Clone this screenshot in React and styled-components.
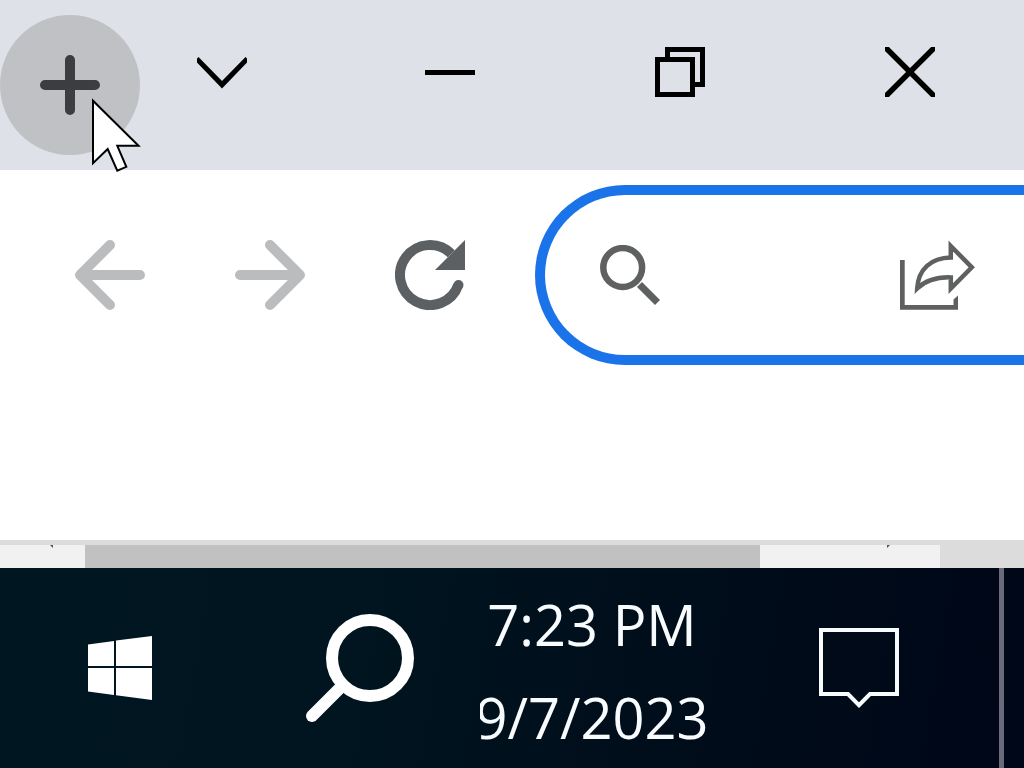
import React, { useState } from "react";
import styled, { createGlobalStyle } from "styled-components";

const GlobalStyle = createGlobalStyle`
	* {
		box-sizing: border-box;
	}

	body {
		margin: 0;
		background: #ffffff;
		font-family: "Open Sans", "Noto Sans", sans-serif;
	}
`;

const Desktop = styled.div`
	display: flex;
	flex-direction: column;
	min-height: 100vh;
	overflow: hidden;
`;

const Button = styled.button`
	display: flex;
	align-items: center;
	justify-content: center;
	flex-shrink: 0;
	padding: 0;
	border: 0;
	background: transparent;
	color: inherit;
	font: inherit;

	svg {
		display: block;
	}
`;

const TabStrip = styled.header`
	position: relative;
	display: flex;
	align-items: flex-start;
	height: 170px;
	background: #dee1e7;
	color: #000000;
`;

const NewTabButton = styled(Button)`
	width: 140px;
	height: 140px;
	margin-top: 15px;
	border-radius: 50%;
	background: #c0c1c5;
	color: #3c3d41;
`;

const CaptionButton = styled(Button)`
	width: 50px;
	height: 50px;
	margin-top: 47px;
`;

const TabSearchButton = styled(CaptionButton)`
	margin-left: 57px;
`;

const WindowControls = styled.div`
	display: flex;
	gap: 180px;
	margin-left: auto;
	padding-right: 89px;
`;

// the pointer lies over the new tab button and the toolbar edge
const Pointer = styled.svg`
	position: absolute;
	left: 90px;
	top: 96px;
	z-index: 1;
`;

const Toolbar = styled.nav`
	display: flex;
	align-items: center;
	gap: 90px;
	padding: 15px 0 15px 75px;
`;

const ToolButton = styled(Button)`
	width: 70px;
	height: 70px;
	color: ${(props) => (props.disabled ? "#bbbcbe" : "#5c6062")};
`;

const Omnibox = styled.form`
	display: flex;
	align-items: center;
	flex: 1;
	min-width: 0;
	height: 180px;
	margin-left: -20px;
	padding: 0 49px 0 55px;
	border: 10px solid #1a73e8;
	border-right: 0;
	border-radius: 90px 0 0 90px;
	color: #5f6060;
`;

const AddressInput = styled.input`
	flex: 1;
	min-width: 0;
	height: 100px;
	margin: 0 20px;
	padding: 0;
	border: 0;
	outline: 0;
	background: transparent;
	font-family: inherit;
	font-size: 56px;
	color: #202124;
`;

const Page = styled.main`
	flex: 1;
	background: #ffffff;
`;

const ScrollBar = styled.div`
	display: flex;
	height: 28px;
	border-top: 5px solid #dcdcdc;
	background: #f1f1f1;
`;

const ScrollArrow = styled(Button)`
	width: 85px;
	align-items: flex-start;
	justify-content: ${(props) => (props.$end ? "flex-start" : "flex-end")};
	padding: 0 32px;
	color: #505050;
`;

const Thumb = styled.div`
	flex: 675;
	background: #c1c1c1;
`;

const Track = styled.div`
	flex: 95;
`;

const Corner = styled.div`
	width: 84px;
	background: #dcdcdc;
`;

const Taskbar = styled.footer`
	display: flex;
	height: 200px;
	background: linear-gradient(100deg, #001620 0%, #00151f 35%, #000d1a 65%, #000718 100%);
	color: #f8fcff;
`;

const TaskButton = styled(Button)`
	width: 240px;
`;

const Clock = styled(Button)`
	flex-direction: column;
	justify-content: flex-start;
	width: 244px;
	padding: 10px 20px 0 0;
	overflow: hidden;
	font-size: 56px;
	line-height: 93px;
	white-space: nowrap;
`;

const ActionButton = styled(TaskButton)`
	margin-left: auto;
`;

const ShowDesktop = styled(Button)`
	width: 25px;
	margin-left: 20px;
	border-left: 5px solid #6b6a7a;
`;

function App() {
	const [address, setAddress] = useState("");

	return (
		<>
			<GlobalStyle />
			<Desktop>
				<TabStrip>
					<NewTabButton aria-label="New tab">
						<svg width="60" height="60" fill="none" stroke="currentColor" strokeWidth="10" strokeLinecap="round">
							<path d="M30 5V55M5 30H55" />
						</svg>
					</NewTabButton>
					<TabSearchButton aria-label="Search tabs">
						<svg width="50" height="50" fill="currentColor">
							<path d="M0 11.5V15.5L25 41.5L50 15.5V11.5L48.5 10L25 34L1.5 10Z" />
						</svg>
					</TabSearchButton>
					<WindowControls>
						<CaptionButton aria-label="Minimize">
							<svg width="50" height="50" fill="currentColor">
								<path d="M0 23H50V28H0Z" />
							</svg>
						</CaptionButton>
						<CaptionButton aria-label="Restore">
							<svg width="50" height="50" fill="none" stroke="currentColor" strokeWidth="5">
								<path d="M2.5 12.5H37.5V47.5H2.5Z" />
								<path d="M12.5 12.5V2.5H47.5V37.5H37.5" />
							</svg>
						</CaptionButton>
						<CaptionButton aria-label="Close">
							<svg width="50" height="50" fill="none" stroke="currentColor" strokeWidth="5.5">
								<path d="M-5 -5L55 55M55 -5L-5 55" />
							</svg>
						</CaptionButton>
					</WindowControls>
					<Pointer width="54" height="80" fill="#ffffff" stroke="#000000" strokeWidth="2">
						<path d="M3 4.7V67.2L17.7 53L27.3 74.6L36.3 70.8L27.3 49.8H48.5Z" />
					</Pointer>
				</TabStrip>

				<Toolbar>
					<ToolButton aria-label="Back" disabled>
						<svg width="70" height="70" fill="none" stroke="currentColor" strokeWidth="10" strokeLinecap="round" strokeLinejoin="round">
							<path d="M35 5L5 35L35 65M65 35H8" />
						</svg>
					</ToolButton>
					<ToolButton aria-label="Forward" disabled>
						<svg width="70" height="70" fill="none" stroke="currentColor" strokeWidth="10" strokeLinecap="round" strokeLinejoin="round">
							<path d="M35 5L65 35L35 65M5 35H62" />
						</svg>
					</ToolButton>
					<ToolButton aria-label="Reload">
						<svg width="70" height="70" fill="currentColor">
							<path d="M56.2 13.8A30 30 0 1 0 63.3 45" fill="none" stroke="currentColor" strokeWidth="10" />
							<circle cx="63.5" cy="45" r="5" />
							<path d="M70 0V30H40Z" />
						</svg>
					</ToolButton>
					<Omnibox onSubmit={(e) => e.preventDefault()}>
						<Button type="submit" aria-label="Search">
							<svg width="60" height="60" fill="none" stroke="currentColor" strokeWidth="6.5">
								<circle cx="22.7" cy="22.5" r="19.4" />
								<path d="M39.5 39.5L57.5 57.5" strokeWidth="7" />
							</svg>
						</Button>
						<AddressInput
							aria-label="Address"
							value={address}
							onChange={(e) => setAddress(e.target.value)}
						/>
						<Button type="button" aria-label="Share this page">
							<svg width="75" height="70" fill="currentColor">
								<path d="M0 20H4.7V65H53.5V59.5L58 55.5V69.7H0Z" />
								<path
									d="M50.8 6L71.8 27.3L50.8 48.6V37.4C38 37 26 40 17.2 48.5C18.3 29 31 18 50.8 17.6Z"
									fill="none"
									stroke="currentColor"
									strokeWidth="4.5"
								/>
							</svg>
						</Button>
					</Omnibox>
				</Toolbar>

				<Page />

				<ScrollBar>
					<ScrollArrow aria-label="Scroll left">
						<svg width="3" height="3" fill="currentColor">
							<path d="M0 0H3V3Z" />
						</svg>
					</ScrollArrow>
					<Thumb />
					<Track />
					<ScrollArrow aria-label="Scroll right" $end>
						<svg width="3" height="3" fill="currentColor">
							<path d="M0 0H3L0 3Z" />
						</svg>
					</ScrollArrow>
					<Corner />
				</ScrollBar>

				<Taskbar>
					<TaskButton aria-label="Start">
						<svg width="64" height="64" fill="#ffffff">
							<path d="M0 8.5L26 5V30H0ZM28 4.6L64 0V30H28ZM0 32H26V59L0 55.5ZM28 32H64V64L28 59.3Z" />
						</svg>
					</TaskButton>
					<TaskButton aria-label="Search Windows">
						<svg width="108" height="108" fill="none" stroke="#ffffff" strokeWidth="12" strokeLinecap="round">
							<circle cx="64" cy="44" r="38" />
							<path d="M37 71L6 102" />
						</svg>
					</TaskButton>
					<Clock>
						<span>7:23 PM</span>
						<span>9/7/2023</span>
					</Clock>
					<ActionButton aria-label="Notifications">
						<svg width="80" height="80" fill="none" stroke="currentColor" strokeWidth="4">
							<path d="M2 2H78V66H51L40 77.2L29 66H2Z" />
						</svg>
					</ActionButton>
					<ShowDesktop aria-label="Show desktop" />
				</Taskbar>
			</Desktop>
		</>
	);
}

export default App;
